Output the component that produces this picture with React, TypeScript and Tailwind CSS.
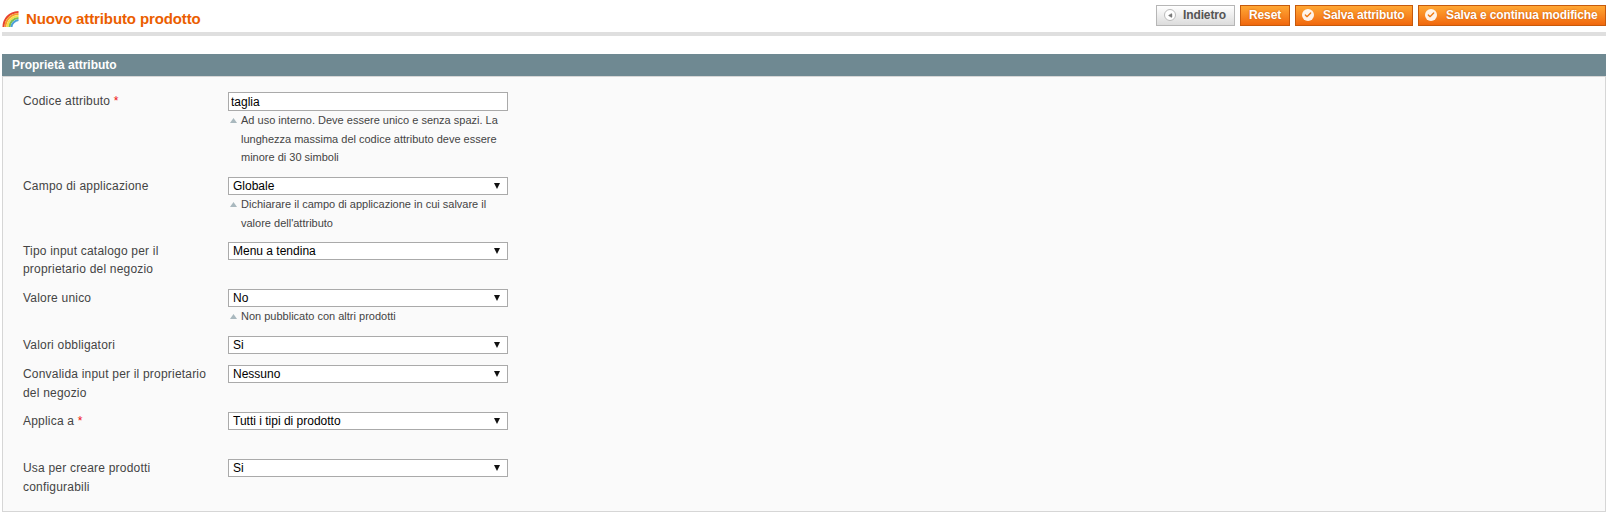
import { Check, Play } from "lucide-react";

const font = "font-['Liberation_Sans',Arial,sans-serif]";

function Rainbow() {
  return (
    <svg width="17" height="16" viewBox="0 0 17 16" fill="none" className="shrink-0">
      <path d="M1.5 16C1.5 8 7 1.5 16.5 1" stroke="#e8432e" strokeWidth="2" />
      <path d="M3.5 16C3.5 9 8.5 3.5 16.5 3" stroke="#f59a2c" strokeWidth="2" />
      <path d="M5.5 16C5.5 10.5 9.5 5.5 16.5 5" stroke="#f6dc45" strokeWidth="2" />
      <path d="M7.5 16C7.5 11.5 11 7.5 16.5 7" stroke="#7cc04b" strokeWidth="2" />
      <path d="M9.5 16C9.5 13 12.5 9.5 16.5 9" stroke="#4b9fd8" strokeWidth="2" />
    </svg>
  );
}

function Button({ label, icon, width }: { label: string; icon?: boolean; width: string }) {
  return (
    <button className={`h-[21px] ${width} flex items-center gap-[9px] pl-[6px] pb-[1px] border border-[#c65a0c] bg-gradient-to-b from-[#ffa733] to-[#f0670c] text-white text-xs font-bold tracking-[-0.12px] whitespace-nowrap [text-shadow:0_0_2px_#c65a0c]`}>
      {icon && (
        <span className="w-[12px] h-[12px] rounded-full bg-white/90 flex items-center justify-center">
          <Check size={8} strokeWidth={4} className="text-[#f0780f]" />
        </span>
      )}
      <span className={icon ? "" : "pl-[2px]"}>{label}</span>
    </button>
  );
}

function Select({ value }: { value: string }) {
  return (
    <div className="relative h-[18px] w-[280px]">
      <select
        defaultValue={value}
        className="block appearance-none w-full h-full border border-[#aaa] bg-white pl-[4px] text-xs text-black outline-none rounded-none"
      >
        <option>{value}</option>
      </select>
      <svg width="6" height="6" viewBox="0 0 6 6" className="absolute right-[8px] top-[6px]">
        <polygon points="0,0 6,0 3,6" fill="#111" />
      </svg>
    </div>
  );
}

function Note({ children }: { children: React.ReactNode }) {
  return (
    <div className="relative pl-[13px] text-[11px] leading-[18.5px] text-[#444]">
      <svg width="7" height="5" viewBox="0 0 7 5" className="absolute left-[2px] top-[7px]">
        <polygon points="3.5,0 7,5 0,5" fill="#a9b8be" />
      </svg>
      {children}
    </div>
  );
}

function Row({
  label,
  required,
  note,
  control,
  extra,
}: {
  label: string;
  required?: boolean;
  note?: React.ReactNode;
  control: React.ReactNode;
  extra: string;
}) {
  return (
    <div className={`flex ${extra}`}>
      <div className="w-[205px] pr-[2px] text-xs leading-[18.5px] tracking-[0.2px] text-[#444]">
        <div className="max-w-[184px]">
          {label}
          {required && <span className="text-[#e11]"> *</span>}
        </div>
      </div>
      <div className="w-[280px]">
        {control}
        {note && <Note>{note}</Note>}
      </div>
    </div>
  );
}

export default function App() {
  return (
    <div className={`w-[1609px] h-[517px] bg-white overflow-hidden pl-[2px] pr-[3px] ${font}`}>
      <div className="h-[36px] flex items-start justify-between border-b-4 border-[#dfdfdf] pt-[5px]">
        <div className="flex items-center gap-[7px] pt-[5px]">
          <Rainbow />
          <h1 className="text-[15px] font-bold tracking-[-0.12px] text-[#eb5e00] leading-[18px]">Nuovo attributo prodotto</h1>
        </div>
        <div className="flex gap-[5px]">
          <button className="h-[21px] w-[79px] flex items-center gap-[7px] pl-[7px] pb-[1px] border border-[#b6b6b6] bg-gradient-to-b from-[#ffffff] to-[#dcdcdc] text-[#555] text-xs font-bold tracking-[-0.12px]">
            <span className="w-[12px] h-[12px] rounded-full border border-[#bbb] bg-white flex items-center justify-center">
              <Play size={5} className="text-[#777] fill-[#777] rotate-180" />
            </span>
            Indietro
          </button>
          <Button label="Reset" width="w-[50px]" />
          <Button label="Salva attributo" icon width="w-[118px]" />
          <Button label="Salva e continua modifiche" icon width="w-[188px]" />
        </div>
      </div>

      <div className="mt-[18px] h-[22px] bg-[#6f8992] px-[10px] text-xs font-bold leading-[22px] text-white">
        Proprietà attributo
      </div>
      <div className="h-[436px] border border-[#d6d6d6] bg-[#fafafa] pl-[20px] pt-[15px]">
        <Row
          label="Codice attributo"
          required
          extra="pb-[10.5px]"
          control={
            <input
              defaultValue="taglia"
              className="block w-[280px] h-[19px] border border-[#aaa] bg-white px-[2px] text-xs text-black outline-none"
            />
          }
          note="Ad uso interno. Deve essere unico e senza spazi. La lunghezza massima del codice attributo deve essere minore di 30 simboli"
        />
        <Row
          label="Campo di applicazione"
          extra="pb-[9.5px]"
          control={<Select value="Globale" />}
          note="Dichiarare il campo di applicazione in cui salvare il valore dell'attributo"
        />
        <Row
          label="Tipo input catalogo per il proprietario del negozio"
          extra="pb-[10.5px]"
          control={<Select value="Menu a tendina" />}
        />
        <Row
          label="Valore unico"
          extra="pb-[10.5px]"
          control={<Select value="No" />}
          note="Non pubblicato con altri prodotti"
        />
        <Row label="Valori obbligatori" extra="pb-[10.5px]" control={<Select value="Si" />} />
        <Row
          label="Convalida input per il proprietario del negozio"
          extra="pb-[10px]"
          control={<Select value="Nessuno" />}
        />
        <Row label="Applica a" required extra="pb-[28.5px]" control={<Select value="Tutti i tipi di prodotto" />} />
        <Row label="Usa per creare prodotti configurabili" extra="" control={<Select value="Si" />} />
      </div>
    </div>
  );
}
